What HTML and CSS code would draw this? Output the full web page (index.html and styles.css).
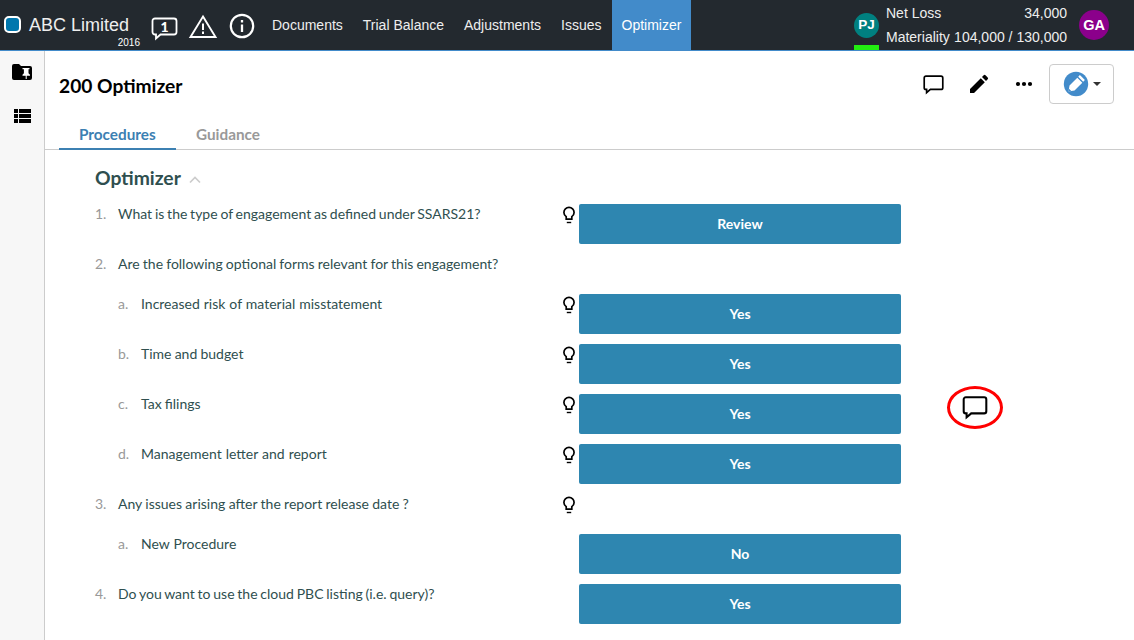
FILE: index.html
```html
<!DOCTYPE html>
<html lang="en">
<head>
<meta charset="utf-8">
<title>200 Optimizer</title>
<link rel="stylesheet" href="styles.css">
</head>
<body>
<svg class="defs" width="0" height="0">
  <symbol id="bulb" viewBox="0 0 14 18"><path d="M7 1.3a5.1 5.1 0 0 0-5.1 5.1c0 1.900 1 3.200 2.300 4.200v2.500h5.600v-2.500c1.300-1 2.300-2.300 2.300-4.200A5.100 5.100 0 0 0 7 1.300Z" fill="none" stroke="#000" stroke-width="1.7"/><path d="M4.800 16.500h4.400" stroke="#000" stroke-width="1.400"/></symbol>
  <symbol id="comment" viewBox="0 0 26 24"><path d="M4.500 2h17a2 2 0 0 1 2 2v11a2 2 0 0 1-2 2H9.500l-4.300 3.700V17H4.500a2 2 0 0 1-2-2V4a2 2 0 0 1 2-2Z" fill="none" stroke="#000" stroke-width="1.900"/></symbol>
</svg>
<header class="topbar">
  <div class="brand">
    <span class="brand-mark"></span>
    <span class="brand-name">ABC Limited</span>
    <span class="brand-year">2016</span>
  </div>
  <div class="alerts">
    <svg class="alert-comment" width="28" height="26" viewBox="0 0 28 26"><path d="M4 2.500h19a2.500 2.500 0 0 1 2.500 2.500v11a2.500 2.500 0 0 1-2.500 2.500H9.500l-4.500 4v-4H4A2.500 2.500 0 0 1 1.500 16V5A2.500 2.500 0 0 1 4 2.500Z" fill="none" stroke="#fff" stroke-width="1.800"/><text class="count" x="13.500" y="15.500" text-anchor="middle">1</text></svg>
    <svg class="alert-warning" width="30" height="26" viewBox="0 0 30 26"><path d="M15 3.500 27.500 24h-25Z" fill="none" stroke="#fff" stroke-width="1.900"/><path d="M15 10.500v6.500M15 18.500v2.500" stroke="#fff" stroke-width="2"/></svg>
    <svg class="alert-info" width="26" height="26" viewBox="0 0 26 26"><circle cx="13" cy="13" r="11.200" fill="none" stroke="#fff" stroke-width="2.200"/><path d="M13 11.500v7.500M13 7v2.500" stroke="#fff" stroke-width="2.300"/></svg>
  </div>
  <nav class="nav">
    <a>Documents</a><a>Trial Balance</a><a>Adjustments</a><a>Issues</a><a class="active">Optimizer</a>
  </nav>
  <div class="account">
    <div class="presence"><span class="avatar teal">PJ</span><span class="online"></span></div>
    <dl class="figures">
      <div><dt>Net Loss</dt><dd>34,000</dd></div>
      <div><dt>Materiality</dt><dd>104,000 / 130,000</dd></div>
    </dl>
    <span class="avatar purple">GA</span>
  </div>
</header>
<div class="body">
  <aside class="rail">
    <svg width="22" height="18" viewBox="0 0 22 18"><path d="M3 1h5l2 2h9a2 2 0 0 1 2 2v10a2 2 0 0 1-2 2H3a2 2 0 0 1-2-2V3a2 2 0 0 1 2-2Z"/><path fill="#fff" d="M11.500 5h7v1.200h-1v4l1.500 1.500v1h-3.300V16h-1v-3.300h-3.200v-1l1.400-1.500v-4h-1.400Z"/></svg>
    <svg width="18" height="16" viewBox="0 0 18 16"><path d="M1 1h4v4H1zM6 1h12v4H6zM1 6h4v4H1zM6 6h12v4H6zM1 11h4v4H1zM6 11h12v4H6z"/></svg>
  </aside>
  <main class="content">
    <div class="titlebar">
      <h1>200 Optimizer</h1>
      <div class="tools">
        <svg class="tool-comment" width="23" height="22"><use href="#comment"/></svg>
        <svg class="tool-edit" width="20" height="20" viewBox="0 0 20 20"><path d="M1 19v-4L11.800 4.200l4 4L5 19ZM13 3l1.700-1.700a1.300 1.300 0 0 1 1.800 0l2.200 2.200a1.300 1.300 0 0 1 0 1.800L17 7Z"/></svg>
        <svg class="tool-more" width="18" height="6" viewBox="0 0 18 6"><circle cx="3" cy="3" r="2.100"/><circle cx="9" cy="3" r="2.100"/><circle cx="15" cy="3" r="2.100"/></svg>
        <button class="mode">
          <svg width="26" height="26" viewBox="0 0 26 26"><circle cx="13" cy="13" r="12.200" fill="#428bca"/><path fill="#fff" d="m5.500 20.500 1-6 7.800-7.800 5 5-7.800 7.800ZM15.200 5.800l1.700-1.700 5 5-1.700 1.700Z"/><path d="m5.500 20.500.5-2.800 2.300 2.300Z" fill="#428bca"/></svg>
          <span class="caret"></span>
        </button>
      </div>
    </div>
    <div class="tabs"><a class="tab selected">Procedures</a><a class="tab">Guidance</a></div>
    <section class="procedures">
      <h2>Optimizer <svg width="12" height="8" viewBox="0 0 12 8"><path d="m1 6.500 5-5 5 5" fill="none" stroke="#ccc" stroke-width="1.700"/></svg></h2>
      <div class="row"><span class="num">1.</span><p class="tight">What is the type of engagement as defined under SSARS21?</p><svg class="bulb"><use href="#bulb"/></svg><button class="answer">Review</button></div>
      <div class="row"><span class="num">2.</span><p class="snug">Are the following optional forms relevant for this engagement?</p></div>
      <div class="row sub"><span class="num">a.</span><p class="loose">Increased risk of material misstatement</p><svg class="bulb"><use href="#bulb"/></svg><button class="answer">Yes</button></div>
      <div class="row sub"><span class="num">b.</span><p class="snug">Time and budget</p><svg class="bulb"><use href="#bulb"/></svg><button class="answer">Yes</button></div>
      <div class="row sub"><span class="num">c.</span><p class="snug">Tax filings</p><svg class="bulb"><use href="#bulb"/></svg><button class="answer">Yes</button>
        <span class="marked"><svg width="28" height="26"><use href="#comment"/></svg></span></div>
      <div class="row sub"><span class="num">d.</span><p class="loose">Management letter and report</p><svg class="bulb"><use href="#bulb"/></svg><button class="answer">Yes</button></div>
      <div class="row"><span class="num">3.</span><p class="slight">Any issues arising after the report release date ?</p><svg class="bulb"><use href="#bulb"/></svg></div>
      <div class="row sub"><span class="num">a.</span><p class="loose">New Procedure</p><span class="bulb"></span><button class="answer">No</button></div>
      <div class="row"><span class="num">4.</span><p class="tight">Do you want to use the cloud PBC listing (i.e. query)?</p><span class="bulb"></span><button class="answer">Yes</button></div>
    </section>
  </main>
</div>
</body>
</html>
```
FILE: styles.css
```css
* { box-sizing: border-box; }
body { margin: 0; height: 640px; overflow: hidden; display: flex; flex-direction: column; background: #fff; font-family: Lato, sans-serif; }
h1, h2, p, dl, dd { margin: 0; }
.defs { position: absolute; }
svg { display: block; flex: none; }

.topbar { display: flex; height: 51px; flex: none; background: #23292f; border-bottom: 1px solid #428bca; color: #fff; font-family: "Liberation Sans", Arial, sans-serif; }
.brand { display: grid; grid-template-columns: 25px 111px; grid-template-rows: 20px 14px; width: 151px; padding: 15px 0 0 4px; align-content: start; }
.brand-mark { width: 17px; height: 17px; margin-top: 1px; border: 2px solid #fff; border-radius: 5px; background: #0077ae; }
.brand-name { font-size: 18px; line-height: 20px; color: #eee; white-space: nowrap; }
.brand-year { grid-column: 2; justify-self: end; font-size: 10px; line-height: 15px; }
.alerts { display: flex; width: 111px; padding-top: 13px; }
.alert-comment { margin-top: 3px; }
.alert-warning { margin-left: 9px; }
.alert-info { margin-left: 11px; }
.count { font: 900 14px Lato, sans-serif; fill: #fff; }
.nav { display: flex; font-size: 14px; color: #eee; }
.nav a { padding: 0 10px; line-height: 50px; white-space: nowrap; }
.nav .active { background: #428bca; color: #fff; }
.account { display: flex; margin-left: auto; padding-right: 25px; }
.presence { display: flex; flex-direction: column; justify-content: space-between; padding-top: 13px; }
.avatar { display: flex; align-items: center; justify-content: center; border-radius: 50%; font-weight: bold; }
.teal { width: 25px; height: 25px; padding-bottom: 2px; background: #008080; font-size: 13.5px; }
.online { height: 5px; background: #2e1; }
.figures { width: 181px; margin-left: 7px; padding-top: 1px; font-size: 14px; line-height: 24px; color: #eee; }
.figures div { display: flex; justify-content: space-between; }
.purple { width: 30px; height: 30px; margin: 10px 0 0 12px; background: #8b008b; font-size: 14.5px; }

.body { display: flex; flex: 1; min-height: 0; }
.rail { display: flex; flex-direction: column; align-items: center; gap: 27px; width: 45px; padding-top: 12px; background: #f7f7f7; border-right: 1px solid #ccc; }
.content { flex: 1; }
.titlebar { display: flex; justify-content: space-between; height: 68px; padding: 13px 20px 0 14px; }
h1 { margin-top: 10px; font-size: 19.2px; line-height: 24px; font-weight: 700; }
.tools { display: flex; align-items: center; height: 40px; }
.tool-comment { margin-top: 1px; }
.tool-edit { margin-left: 24px; }
.tool-more { margin-left: 26px; }
.mode { display: flex; align-items: center; justify-content: center; gap: 4px; width: 65px; height: 40px; margin-left: 16px; padding: 0; background: #fff; border: 1px solid #ccc; border-radius: 4px; }
.caret { border: 4px solid transparent; border-top-color: #333; border-bottom: 0; }
.tabs { display: flex; height: 31px; padding-left: 14px; border-bottom: 1px solid #ccc; }
.tab { height: 31px; padding: 0 20px; font-size: 15.3px; line-height: 30px; font-weight: 700; color: #999; }
.selected { width: 117px; color: #3c80b2; border-bottom: 2px solid #3c80b2; }

.procedures { padding: 15px 0 0 50px; color: #2f4f4f; }
h2 { display: flex; align-items: center; gap: 8px; height: 24px; font-size: 19.3px; font-weight: 700; margin-bottom: 15px; }
h2 svg { margin-top: 5px; }
.row { display: flex; align-items: flex-start; min-height: 30px; margin-bottom: 10px; font-size: 14px; line-height: 20px; }
.num { width: 23px; color: #999; }
.row p { width: 444px; white-space: nowrap; }
.row.sub { padding-left: 23px; }
.row.sub p { width: 421px; }
.tight { word-spacing: -.8px; }
.snug { word-spacing: -.42px; }
.slight { word-spacing: -.25px; }
.loose { word-spacing: .4px; }
.bulb { width: 14px; height: 18px; margin: 2px 3px 0 0; }
.answer { width: 322px; height: 40px; padding: 0 0 2px; border: 0; border-radius: 2px; background: #2e86b0; color: #fff; font: 700 14px Lato, sans-serif; }
.marked { display: flex; align-items: center; justify-content: center; width: 56px; height: 43px; margin: -8px 0 -11px 46px; border: 3px solid #f00; border-radius: 50%; }
```
